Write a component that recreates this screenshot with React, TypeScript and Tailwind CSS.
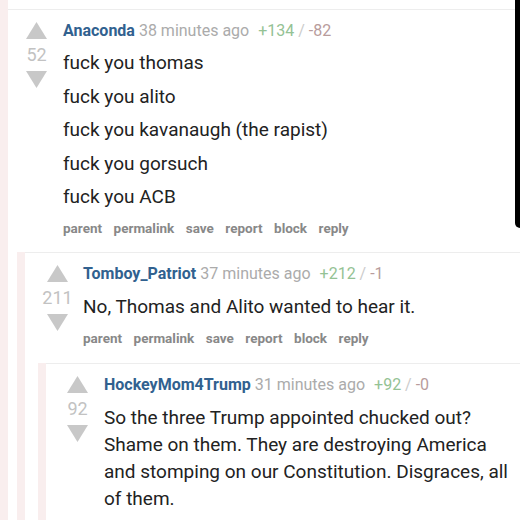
import React from "react";

const Tri = ({ down }: { down?: boolean }) => (
  <svg width="21" height="17" viewBox="0 0 21 17" className="block">
    {down ? (
      <polygon points="0,0 21,0 10.5,17" fill="#c8c8c8" />
    ) : (
      <polygon points="10.5,0 21,17 0,17" fill="#c8c8c8" />
    )}
  </svg>
);

type Props = {
  outer: string;
  rowPad: string;
  mainMl: string;
  score: string;
  user: string;
  time: string;
  plus: string;
  minus: string;
  body: React.ReactNode;
  hideActions?: boolean;
  children?: React.ReactNode;
};

function Comment({ outer, rowPad, mainMl, score, user, time, plus, minus, body, hideActions, children }: Props) {
  return (
    <div className={outer}>
      <div className={`flex border-t border-[#ededed] ${rowPad}`}>
        <div className="w-[31px] shrink-0 flex flex-col items-center pt-[12px]">
          <Tri />
          <div className="mt-[6px] text-[18px] leading-[20px] text-[#c2c2c2]">{score}</div>
          <div className="mt-[6px]">
            <Tri down />
          </div>
        </div>
        <div className={`${mainMl} pt-[11px] flex-1 min-w-0`}>
          <div className="text-[16px] leading-[20px] whitespace-nowrap">
            <span className="font-bold text-[#31618f]">{user}</span>{" "}
            <span className="text-[#ababab]">{time}</span>
            <span className="ml-[9px] text-[#94c294]">{plus}</span>
            <span className="text-[#cccccc]"> / </span>
            <span className="text-[#b89c9c]">{minus}</span>
          </div>
          {body}
          {!hideActions && (
            <div className="mt-[10px] flex gap-[11.5px] text-[13.5px] leading-[16px] font-bold text-[#888888]">
              <span>parent</span>
              <span>permalink</span>
              <span>save</span>
              <span>report</span>
              <span>block</span>
              <span>reply</span>
            </div>
          )}
        </div>
      </div>
      {children}
    </div>
  );
}

export default function App() {
  return (
    <div
      className="relative w-[520px] h-[520px] overflow-hidden bg-white text-[#222222]"
      style={{ fontFamily: "Roboto, 'Noto Sans', sans-serif" }}
    >
      <Comment
        outer="border-l-[8px] border-[#f9eeee] pt-[9px] min-h-[520px]"
        rowPad="pl-[13px]"
        mainMl="ml-[11px]"
        score="52"
        user="Anaconda"
        time="38 minutes ago"
        plus="+134"
        minus="-82"
        body={
          <div className="text-[19px] leading-[27px]">
            <p className="mt-[8px]">fuck you thomas</p>
            <p className="mt-[6.5px]">fuck you alito</p>
            <p className="mt-[6.5px]">fuck you kavanaugh (the rapist)</p>
            <p className="mt-[6.5px]">fuck you gorsuch</p>
            <p className="mt-[6.5px]">fuck you ACB</p>
          </div>
        }
      >
        <Comment
          outer="ml-[9px] mt-[16px] border-l-[8px] border-[#f9eeee] min-h-[300px]"
          rowPad="pl-[17px]"
          mainMl="ml-[10px]"
          score="211"
          user="Tomboy_Patriot"
          time="37 minutes ago"
          plus="+212"
          minus="-1"
          body={
            <div className="text-[19px] leading-[27px]">
              <p className="mt-[8.5px]">No, Thomas and Alito wanted to hear it.</p>
            </div>
          }
        >
          <Comment
            outer="ml-[13px] mt-[17px] border-l-[8px] border-[#f9eeee] min-h-[200px]"
            rowPad="pl-[16px]"
            mainMl="ml-[11px]"
            score="92"
            user="HockeyMom4Trump"
            time="31 minutes ago"
            plus="+92"
            minus="-0"
            hideActions
            body={
              <div className="text-[19px] leading-[27px] whitespace-nowrap">
                <p className="mt-[9px]">
                  So the three Trump appointed chucked out?
                  <br />
                  Shame on them. They are destroying America
                  <br />
                  and stomping on our Constitution. Disgraces, all
                  <br />
                  of them.
                </p>
              </div>
            }
          />
        </Comment>
      </Comment>
      <div className="absolute right-0 top-0 w-[5px] h-[228px] bg-black rounded-bl-[6px]" />
    </div>
  );
}
